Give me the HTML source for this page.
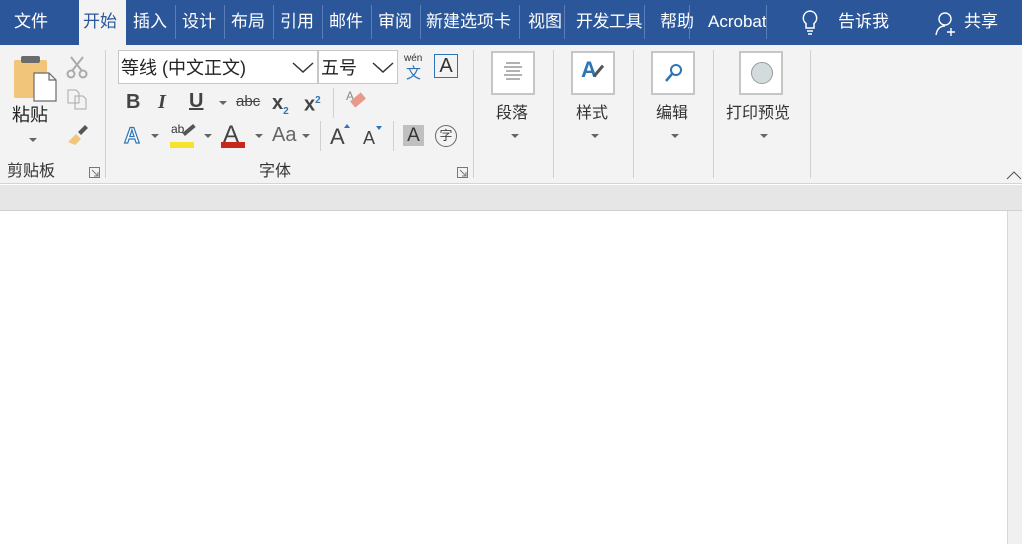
<!DOCTYPE html>
<html><head><meta charset="utf-8"><style>
*{margin:0;padding:0;box-sizing:border-box}
body{width:1022px;height:544px;overflow:hidden;position:relative;background:#fff;font-family:"Liberation Sans","Noto Sans CJK SC",sans-serif;}
.a{position:absolute;white-space:nowrap}
#top{position:absolute;left:0;top:0;width:1022px;height:45px;background:#2b579a}
.t{position:absolute;top:11px;color:#fff;font-size:17px;line-height:22px}
.sep{position:absolute;top:5px;width:1px;height:34px;background:#5a7fb8}
#rib{position:absolute;left:0;top:45px;width:1022px;height:139px;background:#f3f3f3;border-bottom:1px solid #d4d4d4}
.dv{position:absolute;top:50px;width:1px;height:128px;background:#d0d0d0}
.lbl{position:absolute;font-size:16px;color:#333;line-height:20px}
.box{position:absolute;top:51px;width:44px;height:44px;background:#fff;border:2px solid #c6c6c6}
.dd{position:absolute;width:0;height:0;border-left:4px solid transparent;border-right:4px solid transparent;border-top:4px solid #666}
.ic{position:absolute;font-size:20px;color:#444;font-weight:bold;line-height:24px}
</style></head><body>
<div id="top">
<div class="a" style="left:79px;top:0;width:47px;height:45px;background:#f3f3f3"></div>
<div class="t" style="left:14px">文件</div>
<div class="t" style="left:83px;color:#2b579a">开始</div>
<div class="t" style="left:133px">插入</div>
<div class="t" style="left:182px">设计</div>
<div class="t" style="left:231px">布局</div>
<div class="t" style="left:280px">引用</div>
<div class="t" style="left:329px">邮件</div>
<div class="t" style="left:378px">审阅</div>
<div class="t" style="left:426px">新建选项卡</div>
<div class="t" style="left:528px">视图</div>
<div class="t" style="left:576px;letter-spacing:-0.5px">开发工具</div>
<div class="t" style="left:660px">帮助</div>
<div class="t" style="left:708px">Acrobat</div>
<div class="t" style="left:838px">告诉我</div>
<div class="t" style="left:964px">共享</div>
<div class="sep" style="left:175px"></div><div class="sep" style="left:224px"></div><div class="sep" style="left:273px"></div><div class="sep" style="left:322px"></div><div class="sep" style="left:371px"></div><div class="sep" style="left:420px"></div><div class="sep" style="left:519px"></div><div class="sep" style="left:564px"></div><div class="sep" style="left:644px"></div><div class="sep" style="left:689px"></div><div class="sep" style="left:766px"></div>
<svg class="a" style="left:798px;top:9px" width="24" height="28" viewBox="0 0 24 28"><path d="M12 2a7 7 0 0 0-4 12.5V19h8v-4.5A7 7 0 0 0 12 2z M9 22h6 M10 25h4" fill="none" stroke="#fff" stroke-width="1.5"/></svg>
<svg class="a" style="left:934px;top:11px" width="26" height="26" viewBox="0 0 26 26"><circle cx="11" cy="8" r="6" fill="none" stroke="#fff" stroke-width="1.4"/><path d="M2 24c1-6 4-9 9-9 M17 17v8 M13 21h8" fill="none" stroke="#fff" stroke-width="1.4"/></svg>
</div>
<div id="rib">
</div>
<!-- clipboard -->
<div class="a" style="left:14px;top:60px;width:33px;height:38px;background:#f1c57a;border-radius:2px"></div>
<div class="a" style="left:21px;top:56px;width:19px;height:7px;background:#6b6b6b;border-radius:2px"></div>
<svg class="a" style="left:33px;top:72px" width="24" height="30"><path d="M1 1h15l7 7v21H1z M16 1v7h7" fill="#fff" stroke="#6b6b6b" stroke-width="1.2"/></svg>
<div class="lbl" style="left:12px;top:105px;font-size:18px;color:#222">粘贴</div>
<div class="dd" style="left:29px;top:138px"></div>
<svg class="a" style="left:66px;top:55px" width="22" height="24"><path d="M5 2l11 14 M17 2L6 16" stroke="#aaa" stroke-width="2"/><circle cx="5" cy="19" r="3.5" fill="none" stroke="#aaa" stroke-width="2"/><circle cx="17" cy="19" r="3.5" fill="none" stroke="#aaa" stroke-width="2"/></svg>
<svg class="a" style="left:67px;top:89px" width="22" height="22"><path d="M1 1h8l3 3v10H1z M8 7h8l3 3v10H8z" fill="#f3f3f3" stroke="#aaa"/></svg>
<svg class="a" style="left:66px;top:124px" width="24" height="22"><path d="M2 18l8-8 5 5-6 6z" fill="#f1c57a"/><path d="M12 8l7-7 3 3-7 7z" fill="#555"/></svg>
<div class="lbl" style="left:7px;top:162px">剪贴板</div>
<svg class="a" style="left:89px;top:167px" width="11" height="11"><path d="M0.5 0.5h10v10h-10z M3 3l6 6 M9 5v4h-4" fill="none" stroke="#777"/></svg>
<div class="dv" style="left:105px"></div>
<!-- font -->
<div class="a" style="left:118px;top:50px;width:200px;height:34px;background:#fff;border:1px solid #c6c6c6"></div>
<div class="a" style="left:318px;top:50px;width:80px;height:34px;background:#fff;border:1px solid #c6c6c6"></div>
<div class="lbl" style="left:121px;top:58px;font-size:18px;color:#222">等线 (中文正文)</div>
<div class="lbl" style="left:321px;top:58px;font-size:18px;color:#222">五号</div>
<svg class="a" style="left:292px;top:62px" width="22" height="12"><path d="M1 1l10 9 10-9" fill="none" stroke="#333" stroke-width="1.5"/></svg>
<svg class="a" style="left:372px;top:62px" width="22" height="12"><path d="M1 1l10 9 10-9" fill="none" stroke="#333" stroke-width="1.5"/></svg>
<div class="a" style="left:404px;top:53px;font-size:10px;color:#333">wén</div>
<div class="a" style="left:406px;top:62px;font-size:15px;color:#2e75b6">文</div>
<div class="a" style="left:434px;top:54px;width:24px;height:24px;border:1px solid #2e75b6;font-size:20px;color:#333;text-align:center;line-height:22px">A</div>
<div class="ic" style="left:126px;top:90px">B</div>
<div class="ic" style="left:158px;top:90px;font-style:italic;font-family:'Liberation Serif',serif">I</div>
<div class="ic" style="left:189px;top:89px;text-decoration:underline">U</div>
<div class="dd" style="left:219px;top:101px"></div>
<div class="a" style="left:236px;top:93px;font-size:15px;color:#444;text-decoration:line-through">abc</div>
<div class="ic" style="left:272px;top:91px">x<sub style="font-size:10px;color:#2e75b6">2</sub></div>
<div class="ic" style="left:304px;top:89px">x<sup style="font-size:10px;color:#2e75b6">2</sup></div>
<div class="a" style="left:333px;top:88px;width:1px;height:30px;background:#d0d0d0"></div>
<div class="a" style="left:346px;top:89px;font-size:12px;color:#888">A</div>
<div class="a" style="left:351px;top:96px;width:14px;height:8px;background:#e9998a;transform:rotate(-40deg)"></div>
<div class="a" style="left:124px;top:123px;font-size:22px;color:#fff;-webkit-text-stroke:1.2px #2e75b6;font-weight:bold">A</div>
<div class="dd" style="left:151px;top:134px"></div>
<div class="a" style="left:171px;top:122px;font-size:12px;color:#333">ab</div>
<div class="a" style="left:182px;top:128px;width:14px;height:4px;background:#555;transform:rotate(-40deg)"></div>
<div class="a" style="left:170px;top:142px;width:24px;height:6px;background:#f6e32b"></div>
<div class="dd" style="left:204px;top:134px"></div>
<div class="a" style="left:223px;top:121px;font-size:24px;color:#444">A</div>
<div class="a" style="left:221px;top:142px;width:24px;height:6px;background:#c8281b"></div>
<div class="dd" style="left:255px;top:134px"></div>
<div class="a" style="left:272px;top:124px;font-size:20px;color:#666">Aa</div>
<div class="dd" style="left:302px;top:134px"></div>
<div class="a" style="left:320px;top:121px;width:1px;height:30px;background:#d0d0d0"></div>
<div class="a" style="left:330px;top:124px;font-size:22px;color:#444">A</div>
<div class="a" style="left:344px;top:124px;border-left:3px solid transparent;border-right:3px solid transparent;border-bottom:4px solid #2e75b6"></div>
<div class="a" style="left:363px;top:128px;font-size:18px;color:#444">A</div>
<div class="a" style="left:376px;top:126px;border-left:3px solid transparent;border-right:3px solid transparent;border-top:4px solid #2e75b6"></div>
<div class="a" style="left:393px;top:121px;width:1px;height:30px;background:#d0d0d0"></div>
<div class="a" style="left:403px;top:125px;width:21px;height:21px;background:#c0c0c0;font-size:19px;color:#333;text-align:center;line-height:21px">A</div>
<div class="a" style="left:435px;top:125px;width:22px;height:22px;border:1.5px solid #666;border-radius:50%;font-size:13px;color:#444;text-align:center;line-height:19px">字</div>
<div class="lbl" style="left:259px;top:162px">字体</div>
<svg class="a" style="left:457px;top:167px" width="11" height="11"><path d="M0.5 0.5h10v10h-10z M3 3l6 6 M9 5v4h-4" fill="none" stroke="#777"/></svg>
<div class="dv" style="left:473px"></div>
<!-- other groups -->
<div class="box" style="left:491px"></div>
<svg class="a" style="left:503px;top:61px" width="20" height="22"><path d="M3 2h14M1 6h18M3 10h14M1 14h18M3 18h14" stroke="#666"/></svg>
<div class="lbl" style="left:496px;top:104px">段落</div><div class="dd" style="left:511px;top:134px"></div>
<div class="dv" style="left:553px"></div>
<div class="box" style="left:571px"></div>
<div class="a" style="left:581px;top:57px;font-size:22px;font-weight:bold;color:#2e75b6">A</div>
<div class="a" style="left:597px;top:64px;width:3px;height:14px;background:#555;transform:rotate(40deg)"></div>
<div class="lbl" style="left:576px;top:104px">样式</div><div class="dd" style="left:591px;top:134px"></div>
<div class="dv" style="left:633px"></div>
<div class="box" style="left:651px"></div>
<svg class="a" style="left:664px;top:62px" width="20" height="22"><circle cx="12" cy="8" r="5" fill="none" stroke="#2e75b6" stroke-width="2"/><path d="M8 12l-6 7" stroke="#2e75b6" stroke-width="2.5"/></svg>
<div class="lbl" style="left:656px;top:104px">编辑</div><div class="dd" style="left:671px;top:134px"></div>
<div class="dv" style="left:713px"></div>
<div class="box" style="left:739px"></div>
<div class="a" style="left:751px;top:62px;width:22px;height:22px;border-radius:50%;background:#d3dcdc;border:1px solid #999"></div>
<div class="lbl" style="left:726px;top:104px">打印预览</div><div class="dd" style="left:760px;top:134px"></div>
<div class="dv" style="left:810px"></div>
<svg class="a" style="left:1006px;top:170px" width="16" height="10"><path d="M1 9l7-7 7 7" fill="none" stroke="#555"/></svg>
<!-- doc area -->
<div class="a" style="left:0;top:185px;width:1022px;height:26px;background:#e6e6e6;border-bottom:1px solid #d0d0d0"></div>
<div class="a" style="left:1007px;top:211px;width:15px;height:333px;background:#f0f0f0;border-left:1px solid #d8d8d8"></div>
</body></html>
